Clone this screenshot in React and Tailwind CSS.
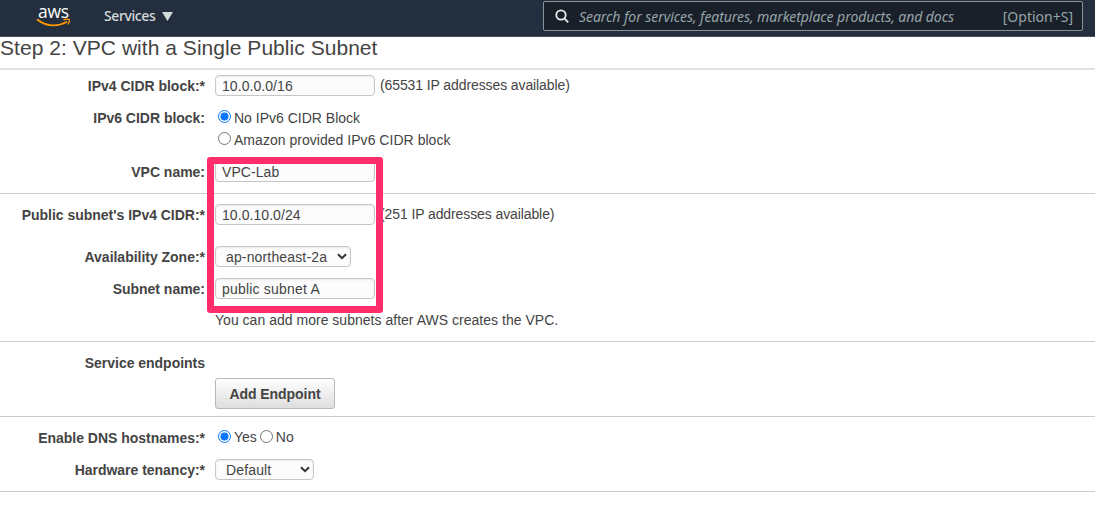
function Radio({ checked, className = "mb-[3px]" }) {
  return (
    <svg className={`h-[13px] w-[13px] shrink-0 ${className}`} viewBox="0 0 13 13">
      <circle cx="6.5" cy="6.5" r="6" fill="#fff" stroke={checked ? "#0a75ff" : "#767676"} />
      {checked && <circle cx="6.5" cy="6.5" r="4" fill="#0a75ff" />}
    </svg>
  );
}

function Row({ label, className = "h-8", children }) {
  return (
    <div className={`flex items-center gap-[10px] ${className}`}>
      <div className="w-[205px] shrink-0 text-right font-bold tracking-[-0.02px] whitespace-nowrap">{label}</div>
      <div className="flex items-center whitespace-nowrap">{children}</div>
    </div>
  );
}

function Input({ value, className = "tracking-[0.06px]" }) {
  return (
    <div
      className={`mb-px h-[21px] w-40 rounded-[4px] border border-[#c6c6c6] bg-[#fcfcfc] pl-[6px] leading-[20px] shadow-[inset_0_1px_2px_rgba(0,0,0,0.08)] ${className}`}
    >
      {value}
    </div>
  );
}

function Select({ value, className }) {
  return (
    <div
      className={`mb-px flex h-[21px] items-center justify-between rounded-[4px] border border-[#c6c6c6] bg-[#fcfcfc] pr-[3px] pl-[10px] leading-[20px] shadow-[inset_0_1px_2px_rgba(0,0,0,0.08)] ${className}`}
    >
      <span className="pt-px tracking-[0.15px]">{value}</span>
      <svg className="mb-px h-[7px] w-[10px]" viewBox="0 0 10 7" fill="none" stroke="#333" strokeWidth="2">
        <path d="M1 1.2 5 5.2 9 1.2" />
      </svg>
    </div>
  );
}

export default function App() {
  return (
    <div className="relative h-[531px] w-[1095px] overflow-hidden bg-white font-['Liberation_Sans',Arial,sans-serif] text-[14px] leading-[20px] text-[#444]">
      <header className="flex h-[37px] items-start border-b border-[#46515e] bg-[#232f3e] font-['Noto_Sans',sans-serif] text-[#d5dbdb]">
        <div className="ml-[36px] flex w-[35px] flex-col items-center">
          <span className="h-[17px] font-['Open_Sans',sans-serif] text-[17.5px] leading-[24px] font-medium tracking-[-0.2px] text-white">
            <span className="-mt-px block">aws</span>
          </span>
          <svg className="h-[10px] w-[35px]" viewBox="0 0 35 10" fill="none" stroke="#f90" strokeLinecap="round">
            <path d="M1.5 2.8C10 9.6 21.5 10 30.5 5" strokeWidth="1.8" />
            <path d="M28 2.6C33.5 1.4 34.8 2 32.2 7" strokeWidth="1.4" />
          </svg>
        </div>
        <div className="ml-[33px] flex items-center gap-[7px] pt-[6px] text-[14px] leading-[20px] font-medium">
          <span className="tracking-[-0.4px]">Services</span>
          <svg className="h-[9px] w-[11px]" viewBox="0 0 11 9" fill="#d5dbdb">
            <path d="M0 0h11L5.5 9z" />
          </svg>
        </div>
        <div className="mt-px mr-[12px] ml-auto flex h-[30px] w-[540px] items-center rounded-[2px] border border-[#879596] bg-[#1a202a] pr-[9px] pl-[11px] text-[14px] text-[#95a5a6]">
          <svg className="h-[14px] w-[14px]" viewBox="0 0 14 14" fill="none" stroke="#eaeded" strokeWidth="1.8">
            <circle cx="6" cy="6" r="4.7" />
            <path d="m9.4 9.4 3.8 4" />
          </svg>
          <span className="ml-[10px] pt-[2px] tracking-[-0.06px] italic">
            Search for services, features, marketplace products, and docs
          </span>
          <span className="ml-auto pt-[2px]">[Option+S]</span>
        </div>
      </header>

      <h1 className="h-[33px] border-b-2 border-[#e1e1e1] text-[21px] leading-[22px] tracking-[0.04px] whitespace-nowrap">
        Step 2: VPC with a Single Public Subnet
      </h1>

      <section className="border-b border-[#ccc] pb-[5px]">
        <Row label="IPv4 CIDR block:*">
          <Input value="10.0.0.0/16" />
          <span className="mb-[2px] ml-[5px] tracking-[-0.1px]">(65531 IP addresses available)</span>
        </Row>
        <Row label="IPv6 CIDR block:" className="mt-[5px] h-[22px]">
          <div className="flex items-center gap-[3px] pl-[3px]">
            <Radio checked />
            <span>No IPv6 CIDR Block</span>
          </div>
        </Row>
        <Row label="" className="h-[22px]">
          <div className="flex items-center gap-[3px] pl-[3px]">
            <Radio />
            <span className="tracking-[0.03px]">Amazon provided IPv6 CIDR block</span>
          </div>
        </Row>
        <Row label="VPC name:" className="mt-[5px] h-8">
          <Input value="VPC-Lab" />
        </Row>
      </section>

      <section className="border-b border-[#ccc] pt-[5px] pb-[6px]">
        <Row label="Public subnet's IPv4 CIDR:*">
          <Input value="10.0.10.0/24" />
          <span className="mb-[2px] ml-[5px] tracking-[-0.1px]">(251 IP addresses available)</span>
        </Row>
        <Row label="Availability Zone:*" className="mt-[10px] h-8">
          <Select value="ap-northeast-2a" className="w-[136px]" />
        </Row>
        <Row label="Subnet name:">
          <Input value="public subnet A" className="tracking-[0.2px]" />
        </Row>
        <Row label="" className="h-[30px]">
          <span className="tracking-[0.02px]">You can add more subnets after AWS creates the VPC.</span>
        </Row>
      </section>

      <section className="border-b border-[#ccc] pt-[6px] pb-[7px]">
        <Row label="Service endpoints" className="h-[30px]" />
        <Row label="" className="h-[31px]">
          <button className="h-[31px] w-[120px] rounded-[3px] border border-[#b8b8b8] bg-linear-to-b from-white to-[#dedede] font-bold tracking-[-0.05px]">
            Add Endpoint
          </button>
        </Row>
      </section>

      <section className="border-b border-[#ccc] pt-[5px] pb-[5px]">
        <Row label="Enable DNS hostnames:*">
          <div className="mb-[2px] flex items-center gap-[3px] pl-[3px]">
            <Radio checked className="mb-px" />
            <span>Yes</span>
            <Radio className="mb-px" />
            <span>No</span>
          </div>
        </Row>
        <Row label="Hardware tenancy:*">
          <Select value="Default" className="w-[99px]" />
        </Row>
      </section>

      <div className="absolute top-[157px] left-[207px] h-[156px] w-[176px] rounded-[3px] border-[7px] border-[#ff2d6b]" />
    </div>
  );
}
